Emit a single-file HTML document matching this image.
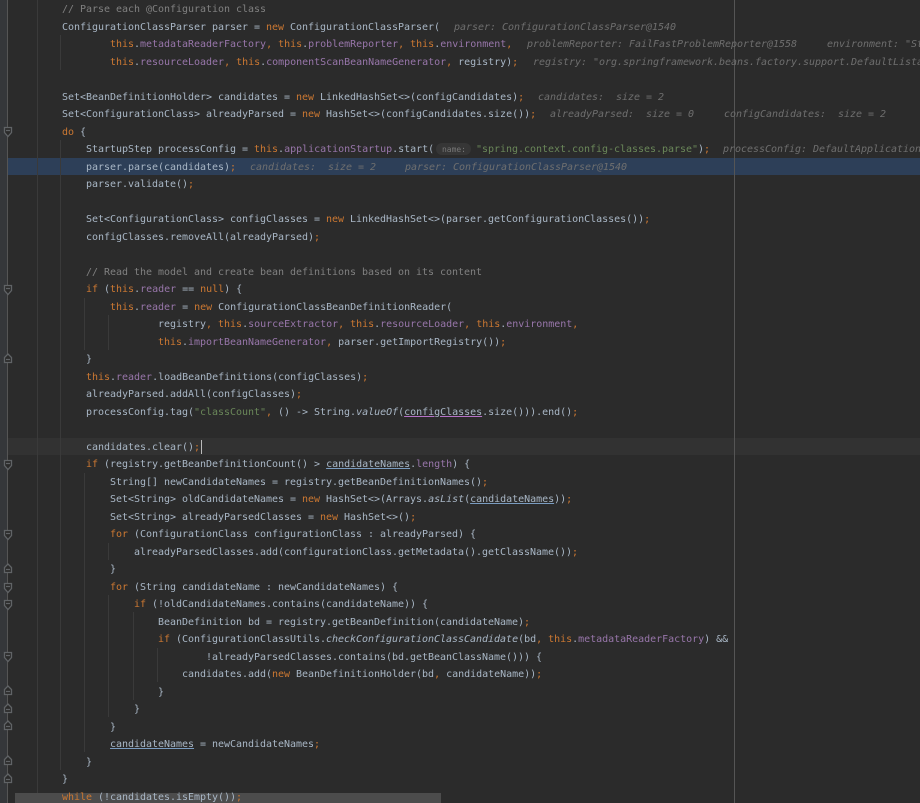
<!DOCTYPE html>
<html><head><meta charset="utf-8"><style>
html,body{margin:0;padding:0;background:#2b2b2b;width:920px;height:803px;overflow:hidden}
#w{position:relative;width:920px;height:803px;overflow:hidden;background:#2b2b2b}
.a{position:absolute}
#c{position:absolute;left:62px;top:1px;font:10px/17.5px "DejaVu Sans Mono","Liberation Mono",monospace;letter-spacing:-.02px;color:#a9b7c6}
#c div{height:17.5px;white-space:pre}
.k{color:#cc7832}.f{color:#9876aa}.m{color:#808080}.s{color:#6a8759}.i{font-style:italic}
.u{text-decoration:underline;text-decoration-color:#7a9cc0}
.p{text-decoration:underline;text-decoration-color:#b673c8}
.h{position:absolute;color:#6f6f6f;font-style:italic}
.g{position:absolute;width:1px;background:#3a3a3a}
</style></head><body><div id="w">
<div class="a" style="left:0;top:0;width:7px;height:803px;background:#35373a"></div>
<div class="a" style="left:7px;top:0;width:1px;height:803px;background:#555"></div>
<div class="a" style="left:8px;top:158px;width:912px;height:17px;background:#2d3f58"></div>
<div class="a" style="left:8px;top:438px;width:912px;height:17px;background:#323232"></div>
<div class="g" style="left:37px;top:0;height:803px"></div>
<div class="g" style="left:60px;top:35px;height:35px"></div>
<div class="g" style="left:60px;top:140px;height:630px"></div>
<div class="g" style="left:84px;top:298px;height:52px"></div>
<div class="g" style="left:108px;top:315px;height:35px"></div>
<div class="g" style="left:84px;top:473px;height:279px"></div>
<div class="g" style="left:108px;top:543px;height:17px"></div>
<div class="g" style="left:108px;top:595px;height:122px"></div>
<div class="g" style="left:133px;top:612px;height:88px"></div>
<div class="g" style="left:157px;top:648px;height:34px"></div>
<div class="a" style="left:734px;top:0;width:1px;height:803px;background:#555"></div>
<svg class="a" style="left:0;top:0" width="20" height="803" fill="#2b2b2b" stroke="#606366" stroke-width="1.300">
<path d="M4.500 127.500h7v5l-3.500 4-3.500-4zM6 130.500h4M4.500 285.500h7v5l-3.500 4-3.500-4zM6 288.500h4M4.500 460.500h7v5l-3.500 4-3.500-4zM6 463.500h4M4.500 530.500h7v5l-3.500 4-3.500-4zM6 533.500h4M4.500 583.500h7v5l-3.500 4-3.500-4zM6 586.500h4M4.500 600.500h7v5l-3.500 4-3.500-4zM6 603.500h4M4.500 652.500h7v5l-3.500 4-3.500-4zM6 655.500h4"/>
<path d="M8 354l3.500 3.500v5h-7v-5zM6 359.500h4M8 564l3.500 3.500v5h-7v-5zM6 569.500h4M8 686l3.500 3.500v5h-7v-5zM6 691.500h4M8 704l3.500 3.500v5h-7v-5zM6 709.500h4M8 721l3.500 3.500v5h-7v-5zM6 726.500h4M8 756l3.500 3.500v5h-7v-5zM6 761.500h4M8 774l3.500 3.500v5h-7v-5zM6 779.500h4"/>
</svg>
<div class="a" style="left:436px;top:143px;width:35px;height:12px;border-radius:6px;background:#363636"></div>
<div class="a" style="left:201px;top:440px;width:1px;height:14px;background:#bbb"></div>
<div class="a" style="left:15px;top:793px;width:426px;height:10px;background:#4c4c4c"></div>
<div id="c"><div><span class="m">// Parse each @Configuration class</span></div>
<div>ConfigurationClassParser parser = <span class="k">new</span> ConfigurationClassParser(<span class="h" style="left:392px">parser: ConfigurationClassParser@1540</span></div>
<div>        <span class="k">this</span>.<span class="f">metadataReaderFactory</span><span class="k">,</span> <span class="k">this</span>.<span class="f">problemReporter</span><span class="k">,</span> <span class="k">this</span>.<span class="f">environment</span><span class="k">,</span><span class="h" style="left:465px">problemReporter: FailFastProblemReporter@1558</span><span class="h" style="left:765px">environment: "St</span></div>
<div>        <span class="k">this</span>.<span class="f">resourceLoader</span><span class="k">,</span> <span class="k">this</span>.<span class="f">componentScanBeanNameGenerator</span><span class="k">,</span> registry)<span class="k">;</span><span class="h" style="left:471px">registry: "org.springframework.beans.factory.support.DefaultLista</span></div>
<div> </div>
<div>Set&lt;BeanDefinitionHolder&gt; candidates = <span class="k">new</span> LinkedHashSet&lt;&gt;(configCandidates)<span class="k">;</span><span class="h" style="left:476px">candidates:  size = 2</span></div>
<div>Set&lt;ConfigurationClass&gt; alreadyParsed = <span class="k">new</span> HashSet&lt;&gt;(configCandidates.size())<span class="k">;</span><span class="h" style="left:488px">alreadyParsed:  size = 0</span><span class="h" style="left:662px">configCandidates:  size = 2</span></div>
<div><span class="k">do</span> {</div>
<div>    StartupStep processConfig = <span class="k">this</span>.<span class="f">applicationStartup</span>.start(<span class="h" style="left:380px;font-size:8px;font-style:normal;color:#777">name:</span><span class="s" style="position:absolute;left:414px">"spring.context.config-classes.parse"</span><span style="position:absolute;left:636px">)<span class="k">;</span></span><span class="h" style="left:661px">processConfig: DefaultApplicationStartup</span></div>
<div>    parser.parse(candidates)<span class="k">;</span><span class="h" style="left:188px">candidates:  size = 2</span><span class="h" style="left:343px">parser: ConfigurationClassParser@1540</span></div>
<div>    parser.validate()<span class="k">;</span></div>
<div> </div>
<div>    Set&lt;ConfigurationClass&gt; configClasses = <span class="k">new</span> LinkedHashSet&lt;&gt;(parser.getConfigurationClasses())<span class="k">;</span></div>
<div>    configClasses.removeAll(alreadyParsed)<span class="k">;</span></div>
<div> </div>
<div>    <span class="m">// Read the model and create bean definitions based on its content</span></div>
<div>    <span class="k">if</span> (<span class="k">this</span>.<span class="f">reader</span> == <span class="k">null</span>) {</div>
<div>        <span class="k">this</span>.<span class="f">reader</span> = <span class="k">new</span> ConfigurationClassBeanDefinitionReader(</div>
<div>                registry<span class="k">,</span> <span class="k">this</span>.<span class="f">sourceExtractor</span><span class="k">,</span> <span class="k">this</span>.<span class="f">resourceLoader</span><span class="k">,</span> <span class="k">this</span>.<span class="f">environment</span><span class="k">,</span></div>
<div>                <span class="k">this</span>.<span class="f">importBeanNameGenerator</span><span class="k">,</span> parser.getImportRegistry())<span class="k">;</span></div>
<div>    }</div>
<div>    <span class="k">this</span>.<span class="f">reader</span>.loadBeanDefinitions(configClasses)<span class="k">;</span></div>
<div>    alreadyParsed.addAll(configClasses)<span class="k">;</span></div>
<div>    processConfig.tag(<span class="s">"classCount"</span><span class="k">,</span> () -&gt; String.<span class="i">valueOf</span>(<span class="p">configClasses</span>.size())).end()<span class="k">;</span></div>
<div> </div>
<div>    candidates.clear()<span class="k">;</span></div>
<div>    <span class="k">if</span> (registry.getBeanDefinitionCount() &gt; <span class="u">candidateNames</span>.<span class="f">length</span>) {</div>
<div>        String[] newCandidateNames = registry.getBeanDefinitionNames()<span class="k">;</span></div>
<div>        Set&lt;String&gt; oldCandidateNames = <span class="k">new</span> HashSet&lt;&gt;(Arrays.<span class="i">asList</span>(<span class="u">candidateNames</span>))<span class="k">;</span></div>
<div>        Set&lt;String&gt; alreadyParsedClasses = <span class="k">new</span> HashSet&lt;&gt;()<span class="k">;</span></div>
<div>        <span class="k">for</span> (ConfigurationClass configurationClass : alreadyParsed) {</div>
<div>            alreadyParsedClasses.add(configurationClass.getMetadata().getClassName())<span class="k">;</span></div>
<div>        }</div>
<div>        <span class="k">for</span> (String candidateName : newCandidateNames) {</div>
<div>            <span class="k">if</span> (!oldCandidateNames.contains(candidateName)) {</div>
<div>                BeanDefinition bd = registry.getBeanDefinition(candidateName)<span class="k">;</span></div>
<div>                <span class="k">if</span> (ConfigurationClassUtils.<span class="i">checkConfigurationClassCandidate</span>(bd<span class="k">,</span> <span class="k">this</span>.<span class="f">metadataReaderFactory</span>) &amp;&amp;</div>
<div>                        !alreadyParsedClasses.contains(bd.getBeanClassName())) {</div>
<div>                    candidates.add(<span class="k">new</span> BeanDefinitionHolder(bd<span class="k">,</span> candidateName))<span class="k">;</span></div>
<div>                }</div>
<div>            }</div>
<div>        }</div>
<div>        <span class="u">candidateNames</span> = newCandidateNames<span class="k">;</span></div>
<div>    }</div>
<div>}</div>
<div><span class="k">while</span> (!candidates.isEmpty())<span class="k">;</span></div></div>
</div></body></html>
